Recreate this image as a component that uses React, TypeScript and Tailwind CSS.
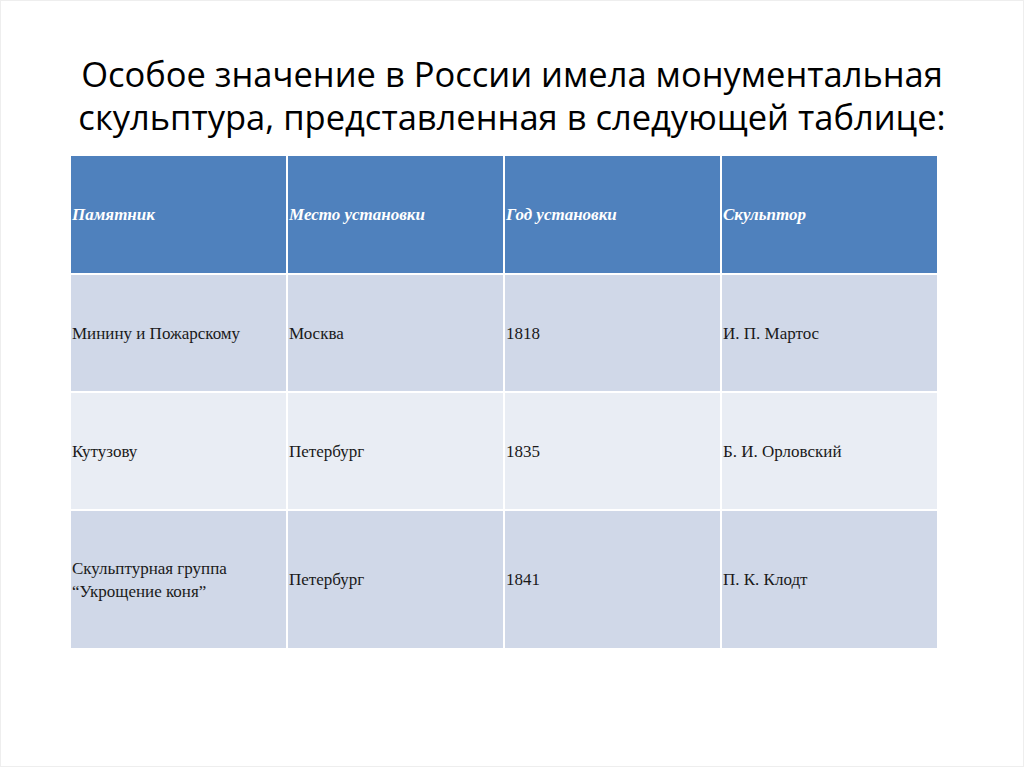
import React from 'react'

const rows = [
    { name: ['Минину и Пожарскому'], place: 'Москва', year: '1818', author: 'И. П. Мартос', bg: 'bg-[#d0d8e8]', h: 'h-[116px]' },
    { name: ['Кутузову'], place: 'Петербург', year: '1835', author: 'Б. И. Орловский', bg: 'bg-[#e9edf4]', h: 'h-[116px]' },
    { name: ['Скульптурная группа', '“Укрощение коня”'], place: 'Петербург', year: '1841', author: 'П. К. Клодт', bg: 'bg-[#d0d8e8]', h: 'h-[137px]' },
]

const headers = ['Памятник', 'Место установки', 'Год установки', 'Скульптор']

function Cell({ children, className }: { children: React.ReactNode; className: string }) {
    return <div className={`flex flex-col justify-center pl-[1px] ${className}`}>{children}</div>
}

export default function App() {
    return (
        <div className="w-[1024px] h-[767px] bg-white border border-[#eeeeee] flex flex-col">
            <h1
                className="mt-[51px] text-center text-[34.5px] leading-[43px] text-black"
                style={{ fontFamily: '"Open Sans", sans-serif' }}
            >
                Особое значение в России имела монументальная
                <br />
                скульптура, представленная в следующей таблице:
            </h1>

            <div
                className="mt-[18px] ml-[70px] w-[866px] flex flex-col gap-[2px]"
                style={{ fontFamily: '"Liberation Serif", serif' }}
            >
                <div className="grid grid-cols-4 gap-[2px] h-[117px]">
                    {headers.map(h => (
                        <Cell key={h} className="bg-[#4f81bd] text-white italic font-bold text-[17px]">
                            {h}
                        </Cell>
                    ))}
                </div>

                {rows.map(r => (
                    <div key={r.year} className={`grid grid-cols-4 gap-[2px] ${r.h} text-[17px] text-[#1a1a1a] leading-[23px]`}>
                        <Cell className={r.bg}>
                            {r.name.map(n => <span key={n}>{n}</span>)}
                        </Cell>
                        <Cell className={r.bg}>{r.place}</Cell>
                        <Cell className={r.bg}>{r.year}</Cell>
                        <Cell className={r.bg}>{r.author}</Cell>
                    </div>
                ))}
            </div>
        </div>
    )
}
